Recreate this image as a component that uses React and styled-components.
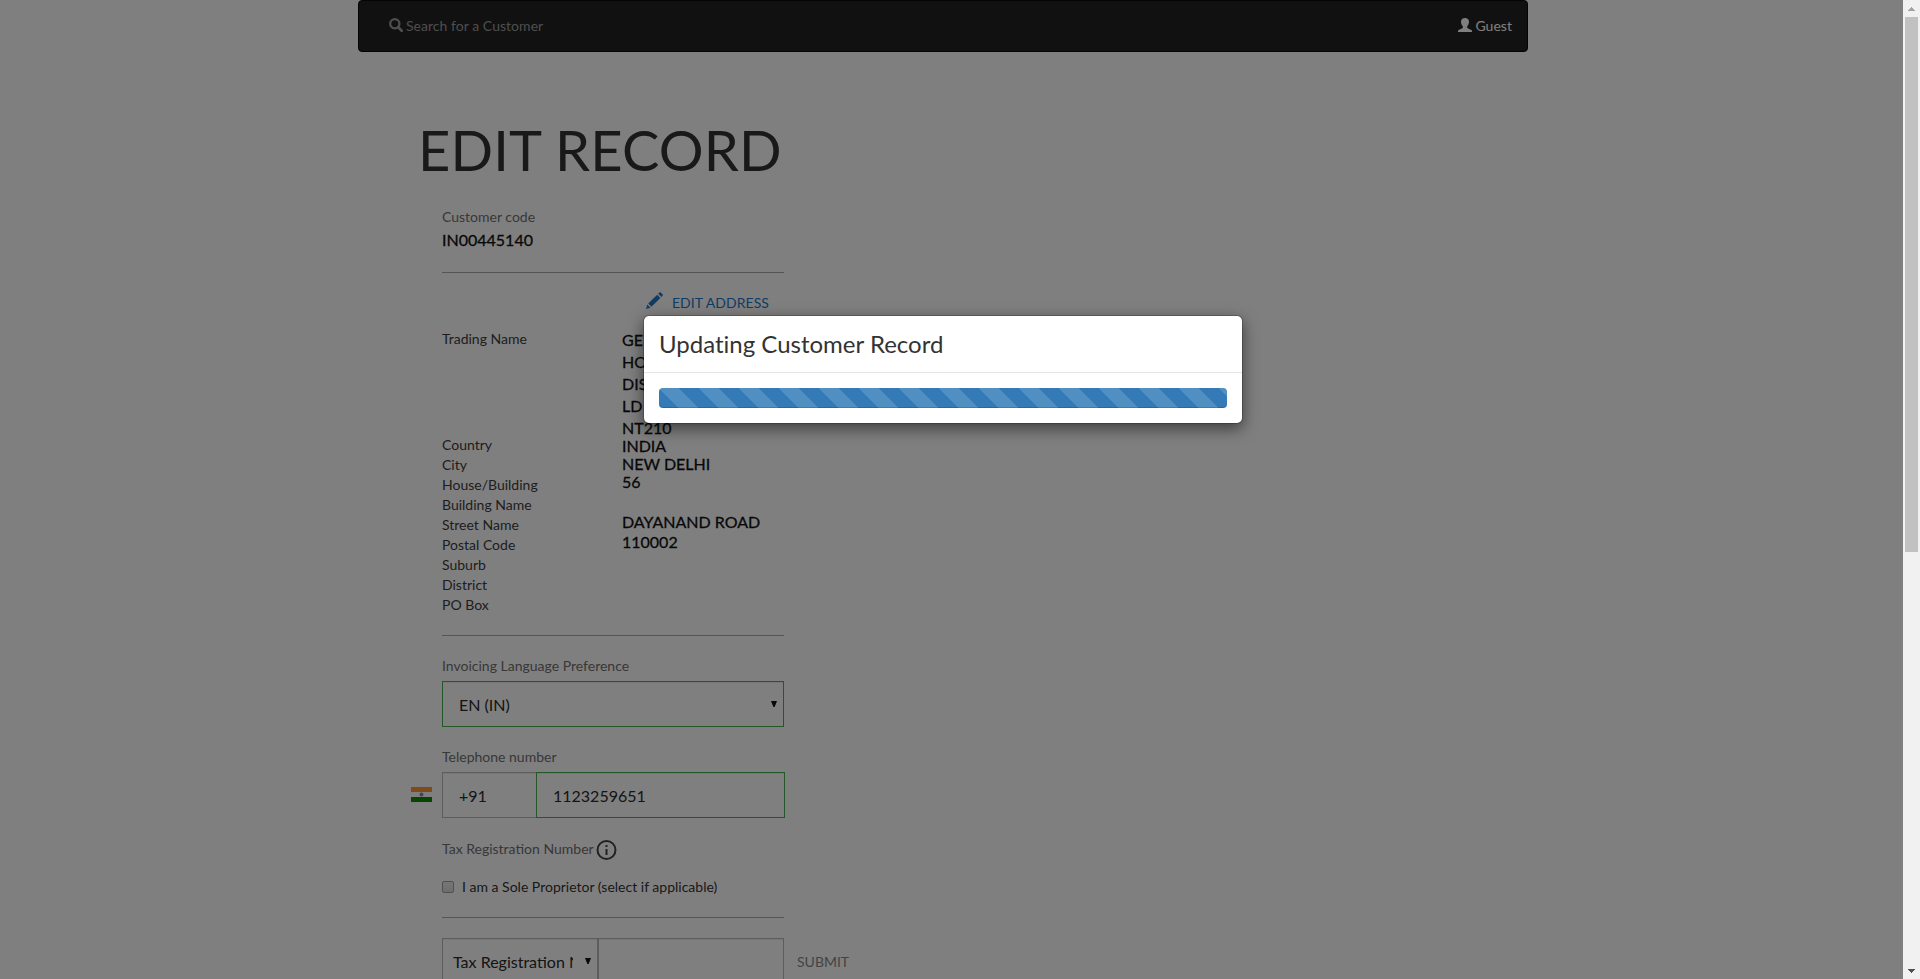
import React from 'react';
import styled, { createGlobalStyle } from 'styled-components';

const Global = createGlobalStyle`
  *, *::before, *::after { box-sizing: border-box; }
  body { margin: 0; overflow: hidden; background: #fff; font-family: Lato, "Open Sans", sans-serif; font-size: 14px; line-height: 20px; color: #333; }
  h1, h3 { margin: 0; font-weight: 400; }
  svg { display: block; flex: none; }
`;

const Screen = styled.div`
  display: flex;
  height: 979px;
  overflow: hidden;
`;

const Page = styled.div`
  position: relative;
  flex: 1;
  min-width: 0;
  height: 979px;
  overflow: hidden;
`;

const Container = styled.div`
  width: 1170px;
  margin-left: 358px;
`;

const Navbar = styled.nav`
  display: flex;
  align-items: center;
  justify-content: space-between;
  height: 52px;
  padding: 0 15px 0 30px;
  background: #222;
  border: 1px solid #080808;
  border-radius: 4px;
`;

const NavItem = styled.span`
  display: flex;
  align-items: center;
  gap: 3px;
  letter-spacing: 0.04px;
  color: ${(p) => (p.$active ? '#fff' : '#9d9d9d')};

  svg { margin-bottom: 2px; }
`;

const Title = styled.h1`
  margin: 67px 0 26px 60px;
  font-size: 56px;
  line-height: 62px;
  letter-spacing: 0.15px;
  white-space: nowrap;
`;

const Form = styled.main`
  width: 342px;
  margin-left: 84px;
`;

const Label = styled.div`
  height: 20px;
  color: #707070;
  white-space: nowrap;
`;

const Code = styled.div`
  margin: 2px 0 21px;
  font-size: 16px;
  line-height: 22px;
  color: #111;
  -webkit-text-stroke: 0.3px #111;
`;

const Rule = styled.div`
  height: 1px;
  background: #aaa;
`;

const EditLink = styled.a`
  display: flex;
  justify-content: flex-end;
  gap: 9px;
  margin: 20px 15px 16px 0;
  letter-spacing: 0.05px;
  color: #1f78c8;

  svg { margin-top: -1px; }
`;

const Address = styled.section`
  display: flex;
  height: 306px;
`;

const Terms = styled.div`
  width: 180px;
  color: #3c3c3c;
`;

const Term = styled.div`
  height: ${(p) => p.$h || 20}px;
`;

const Values = styled.div`
  font-size: 16px;
  color: #111;
  white-space: nowrap;
  -webkit-text-stroke: 0.3px #111;
`;

const Value = styled.div`
  height: ${(p) => p.$h}px;
  line-height: ${(p) => p.$line || p.$h}px;
`;

const Field = styled.section`
  padding-top: ${(p) => p.$top}px;
`;

const ControlRow = styled.div`
  display: flex;
  align-items: center;
  width: ${(p) => p.$w}px;
  margin: 5px 0 0 ${(p) => p.$left || 0}px;
`;

const Control = styled.div`
  display: flex;
  align-items: center;
  justify-content: space-between;
  flex: none;
  width: ${(p) => p.$w}px;
  height: 46px;
  padding: 2px ${(p) => p.$right || 6}px 0 ${(p) => p.$pad || 16}px;
  border: 1px solid ${(p) => (p.$valid ? '#4caf50' : '#bbb')};
  border-right-width: ${(p) => (p.$open ? 0 : 1)}px;
  box-shadow: inset 0 1px 1px rgba(0, 0, 0, 0.075);
  font-size: 16px;
  color: #2a2a2a;
  white-space: nowrap;

  svg { margin-bottom: 2px; }
`;

const Clip = styled.span`
  overflow: hidden;
  width: ${(p) => p.$w}px;
`;

const Flag = styled.svg`
  margin: -2px 10px 0 0;
`;

const TaxLabel = styled.div`
  display: flex;
  gap: 2px;
`;

const CheckRow = styled.label`
  display: flex;
  align-items: center;
  gap: 8px;
  margin: 17px 0 20px;
`;

const Box = styled.span`
  width: 12px;
  height: 12px;
  border: 1px solid #a0a0a0;
  border-radius: 2px;
  background: linear-gradient(#eee, #dcdcdc);
`;

const TaxRow = styled.div`
  display: flex;
  margin-top: 20px;
`;

const Submit = styled.span`
  margin: 14px 0 0 13px;
  color: #888;
`;

const Backdrop = styled.div`
  position: absolute;
  inset: 0;
  display: flex;
  align-items: flex-start;
  padding: 315px 0 0 643px;
  background: rgba(0, 0, 0, 0.5);
`;

const Modal = styled.div`
  width: 600px;
  height: 109px;
  background: #fff;
  background-clip: padding-box;
  border: 1px solid rgba(0, 0, 0, 0.2);
  border-radius: 6px;
  box-shadow: 0 5px 15px rgba(0, 0, 0, 0.5);
`;

const ModalHead = styled.div`
  height: 57px;
  padding: 15px;
  border-bottom: 1px solid #e5e5e5;
`;

const ModalTitle = styled.h3`
  font-size: 24px;
  line-height: 26px;
  letter-spacing: 0.001px;
  font-variant-ligatures: common-ligatures;
`;

const Progress = styled.div`
  height: 20px;
  margin: 15px;
  border-radius: 4px;
  background-color: #337ab7;
  background-image: linear-gradient(45deg, rgba(255, 255, 255, 0.15) 25%, transparent 25%, transparent 50%, rgba(255, 255, 255, 0.15) 50%, rgba(255, 255, 255, 0.15) 75%, transparent 75%, transparent);
  background-size: 40px 40px;
  box-shadow: inset 0 -1px 0 rgba(0, 0, 0, 0.15);
`;

const Scrollbar = styled.div`
  display: flex;
  flex-direction: column;
  align-items: center;
  justify-content: space-between;
  width: 17px;
  height: 979px;
  background: #f1f1f1;
`;

const Thumb = styled.div`
  width: 13px;
  height: 535px;
  margin-bottom: auto;
  background: #c1c1c1;
`;

const SearchIcon = () => (
  <svg width="14" height="14" viewBox="0 0 14 14" fill="none" stroke="currentColor">
    <circle cx="5.8" cy="5.8" r="4.6" strokeWidth="2.3" />
    <path d="M9.3 9.3 12.700 12.700" strokeWidth="2.700" strokeLinecap="round" />
  </svg>
);

const UserIcon = () => (
  <svg width="14" height="14" viewBox="0 0 14 14" fill="currentColor">
    <path d="M7 0C9.4 0 11 1.4 11 3.6c0 2-.6 3.6-1.8 4.6v1.3c0 .5.4.8.9 1l2.8 1.2c.7.3 1.1.8 1.1 1.4v.9H0v-.9c0-.6.4-1.100 1.100-1.400l2.800-1.200c.5-.2.9-.5.9-1V8.200C3.600 7.200 3 5.600 3 3.600 3 1.400 4.600 0 7 0Z" />
  </svg>
);

const Pencil = () => (
  <svg width="17" height="17" viewBox="0 0 17 17" fill="currentColor">
    <path d="m0 17 1.300-4.500 3.200 3.200ZM2.200 11.500 11.200 2.700l3.200 3.200-9 8.900ZM12.200 1.800 13.400.6q.7-.7 1.400 0l1.700 1.700q.7.7 0 1.400l-1.200 1.200Z" />
  </svg>
);

const Caret = () => (
  <svg width="6" height="6" viewBox="0 0 6 6" fill="#111"><path d="M0 0h6L3.600 6H2.400Z" /></svg>
);

const ScrollArrow = ({ down }) => (
  <svg width="17" height="17" viewBox="0 0 17 17" fill={down ? '#505050' : '#a3a3a3'} shapeRendering="crispEdges">
    <path d={down ? 'M5 7h7v1h-1v1h-1v1H9v1H8v-1H7V9H6V8H5Z' : 'M5 11h7v-1h-1V9h-1V8H9V7H8v1H7v1H6v1H5Z'} />
  </svg>
);

const terms = ['Country', 'City', 'House/Building', 'Building Name', 'Street Name', 'Postal Code', 'Suburb', 'District', 'PO Box'];
const tradingName = ['GE', 'HO', 'DIS', 'LD'];

export default function App() {
  return (
    <>
      <Global />
      <Screen>
        <Page>
          <Container>
            <Navbar>
              <NavItem><SearchIcon />Search for a Customer</NavItem>
              <NavItem $active><UserIcon />Guest</NavItem>
            </Navbar>
            <Title>EDIT RECORD</Title>
            <Form>
              <Label>Customer code</Label>
              <Code>IN00445140</Code>
              <Rule />
              <EditLink><Pencil />EDIT ADDRESS</EditLink>
              <Address>
                <Terms>
                  <Term $h={106}>Trading Name</Term>
                  {terms.map((t) => <Term key={t}>{t}</Term>)}
                </Terms>
                <Values>
                  {tradingName.map((t) => <Value key={t} $h={22}>{t}</Value>)}
                  <Value $h={20} $line={22}>NT210</Value>
                  <Value $h={18}>INDIA</Value>
                  <Value $h={18}>NEW DELHI</Value>
                  <Value $h={39} $line={18}>56</Value>
                  <Value $h={20}>DAYANAND ROAD</Value>
                  <Value $h={20}>110002</Value>
                </Values>
              </Address>
              <Rule />
              <Field $top={20}>
                <Label>Invoicing Language Preference</Label>
                <ControlRow $w={342}>
                  <Control $w={342} $valid>EN (IN)<Caret /></Control>
                </ControlRow>
              </Field>
              <Field $top={20}>
                <Label>Telephone number</Label>
                <ControlRow $w={374} $left={-31}>
                  <Flag width="21" height="15" viewBox="0 0 21 15">
                    <rect width="21" height="15" rx="1" fill="#ddd" />
                    <path fill="#f93" d="M0 0h21v5H0z" />
                    <path fill="#fff" d="M0 5h21v5H0z" />
                    <path fill="#128807" d="M0 10h21v5H0z" />
                    <circle cx="10.500" cy="7.500" r="1.900" fill="#8585c4" />
                  </Flag>
                  <Control $w={94} $open>+91</Control>
                  <Control $w={249} $valid>1123259651</Control>
                </ControlRow>
              </Field>
              <Field $top={21}>
                <TaxLabel>
                  <Label>Tax Registration Number</Label>
                  <svg width="21" height="21" viewBox="0 0 21 21" fill="none" stroke="#444" strokeWidth="2">
                    <circle cx="10.500" cy="11" r="9" />
                    <path d="M10.500 6v2M10.500 10v6" />
                  </svg>
                </TaxLabel>
                <CheckRow><Box />I am a Sole Proprietor (select if applicable)</CheckRow>
              </Field>
              <Rule />
              <TaxRow>
                <Control $w={156} $pad={10}><Clip $w={120}>Tax Registration Number</Clip><Caret /></Control>
                <Control $w={186} />
                <Submit>SUBMIT</Submit>
              </TaxRow>
            </Form>
          </Container>
          <Backdrop>
            <Modal role="dialog">
              <ModalHead><ModalTitle>Updating Customer Record</ModalTitle></ModalHead>
              <Progress />
            </Modal>
          </Backdrop>
        </Page>
        <Scrollbar>
          <ScrollArrow />
          <Thumb />
          <ScrollArrow down />
        </Scrollbar>
      </Screen>
    </>
  );
}
